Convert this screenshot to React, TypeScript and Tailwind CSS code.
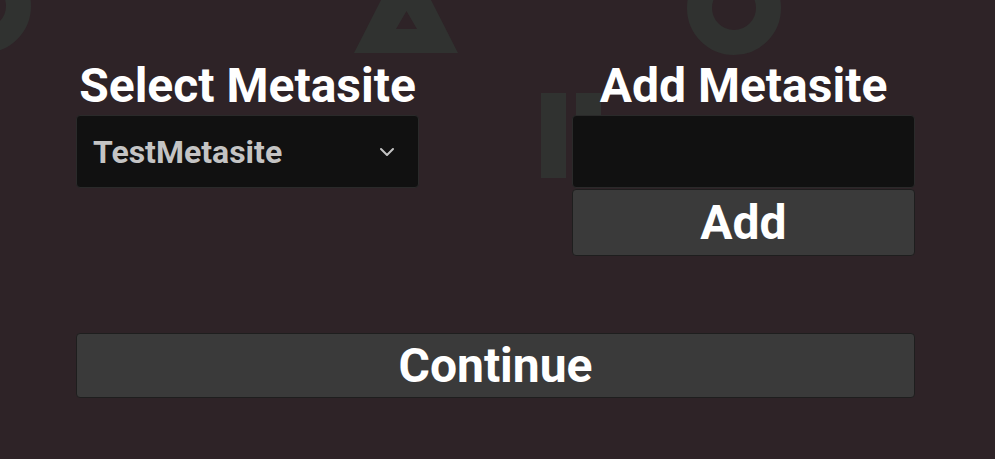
import React from "react";

function Chevron() {
  return (
    <svg width="16" height="10" viewBox="0 0 16 10" fill="none" className="shrink-0">
      <polyline points="2,2 8,8 14,2" stroke="#c4c4c4" strokeWidth="2" strokeLinecap="round" strokeLinejoin="round" />
    </svg>
  );
}

function Background() {
  return (
    <svg
      className="pointer-events-none absolute inset-0 blur-[0.6px]"
      width="995"
      height="459"
      viewBox="0 0 995 459"
    >
      <g fill="#303230">
        <circle cx="-16" cy="6" r="34.5" fill="none" stroke="#303230" strokeWidth="25" />
        <circle cx="734" cy="8" r="34.5" fill="none" stroke="#303230" strokeWidth="25" />
        <path
          fillRule="evenodd"
          d="M406 -49 L354 53 L458 53 Z M406.5 11 L396 29 L417 29 Z"
        />
        <rect x="541" y="93" width="25" height="85" />
        <rect x="576" y="93" width="25" height="85" />
      </g>
    </svg>
  );
}

export default function App() {
  return (
    <div className="relative h-[459px] w-full overflow-hidden bg-[#2e2327] font-['Roboto','Liberation_Sans',sans-serif]">
      <Background />
      <div className="relative pl-[76px] pt-[62px]">
        <div className="flex w-[839px] justify-between">
          <div className="flex w-[343px] flex-col">
            <h1 className="text-center text-[48px] font-bold leading-[48px] text-white">
              Select Metasite
            </h1>
            <button
              type="button"
              className="mt-[5px] flex h-[73px] w-full items-center justify-between rounded-[4px] border border-[#2a2a2a] bg-[#111111] pl-[16px] pr-[23px] text-left"
            >
              <span className="text-[32px] font-bold leading-none text-[#c4c4c4]">TestMetasite</span>
              <Chevron />
            </button>
          </div>
          <div className="flex w-[343px] flex-col">
            <h1 className="text-center text-[48px] font-bold leading-[48px] text-white">
              Add Metasite
            </h1>
            <input
              type="text"
              className="mt-[5px] h-[73px] w-full rounded-[4px] border border-[#2a2a2a] bg-[#111111] px-4 text-[32px] text-white outline-none"
            />
            <button
              type="button"
              className="mt-[1px] flex h-[67px] w-full items-center justify-center rounded-[4px] border border-[#1e1e1e] bg-[#3a3a3a] text-[48px] font-bold leading-none text-white"
            >
              Add
            </button>
          </div>
        </div>
        <button
          type="button"
          className="mt-[77px] flex h-[65px] w-[839px] items-center justify-center rounded-[4px] border border-[#1e1e1e] bg-[#3a3a3a] text-[48px] font-bold leading-none text-white"
        >
          Continue
        </button>
      </div>
    </div>
  );
}
